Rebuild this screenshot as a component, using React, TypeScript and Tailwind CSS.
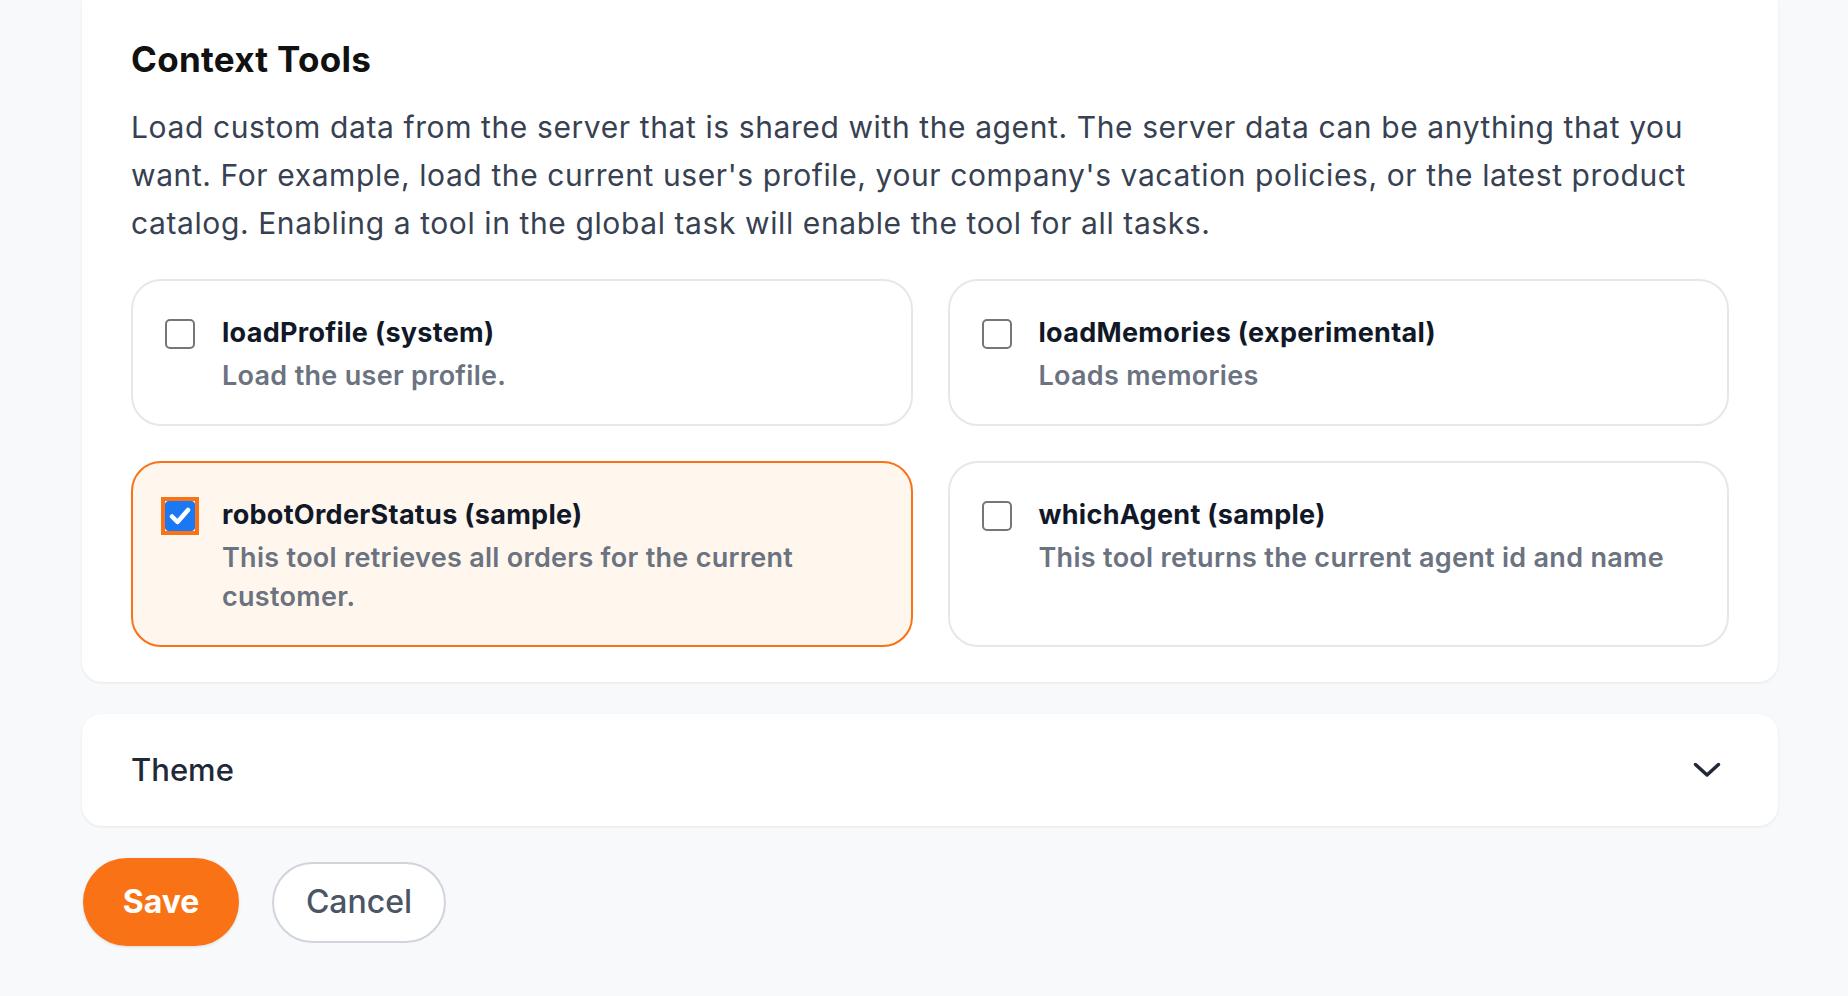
import { useState } from 'react'

const TOOLS = [
  { id: 'loadProfile', label: 'loadProfile (system)', description: 'Load the user profile.' },
  { id: 'loadMemories', label: 'loadMemories (experimental)', description: 'Loads memories' },
  {
    id: 'robotOrderStatus',
    label: 'robotOrderStatus (sample)',
    description: 'This tool retrieves all orders for the current customer.',
  },
  { id: 'whichAgent', label: 'whichAgent (sample)', description: 'This tool returns the current agent id and name' },
]

const INTRO = [
  'Load custom data from the server that is shared with the agent. The server data can be anything that you',
  "want. For example, load the current user's profile, your company's vacation policies, or the latest product",
  'catalog. Enabling a tool in the global task will enable the tool for all tasks.',
]

function Checkbox({ checked }: { checked: boolean }) {
  if (checked) {
    return (
      <div className="w-[30px] h-[30px] shrink-0 mt-[6px] bg-white shadow-[0_0_0_4px_#f97316]">
        <div className="w-full h-full rounded-[4px] bg-[#1a78f5] flex items-center justify-center">
          <svg width="30" height="30" viewBox="0 0 30 30" fill="none">
            <path d="M7 15.5 L12.5 21 L23 9" stroke="white" strokeWidth="4.5" strokeLinecap="round" strokeLinejoin="round" />
          </svg>
        </div>
      </div>
    )
  }
  return <div className="w-[30px] h-[30px] shrink-0 mt-[6px] rounded-[5px] border-2 border-[#767676] bg-white" />
}

export default function App() {
  const [selected, setSelected] = useState<string[]>(['robotOrderStatus'])

  const toggle = (id: string) =>
    setSelected((prev) => (prev.includes(id) ? prev.filter((x) => x !== id) : [...prev, id]))

  return (
    <div
      className="min-h-screen bg-[#f8f9fb] pl-[82px] pr-[70px]"
      style={{ fontFamily: 'Inter, "Noto Sans", sans-serif' }}
    >
      {/* Context tools card */}
      <div className="bg-white rounded-b-[20px] shadow-[0_1px_3px_rgba(0,0,0,0.08)] px-[49px] pt-[39px] pb-[35px]">
        <h2 className="text-[35px] leading-[40px] font-bold text-[#111111] tracking-[0.3px]">Context Tools</h2>
        <p className="mt-[24px] text-[30px] leading-[48px] text-[#374151] tracking-[0.6px]">
          {INTRO.map((line) => (
            <span key={line} className="block whitespace-nowrap">
              {line}
            </span>
          ))}
        </p>

        <div className="mt-[32px] grid grid-cols-2 gap-[35px]">
          {TOOLS.map((tool) => {
            const isChecked = selected.includes(tool.id)
            return (
              <div
                key={tool.id}
                onClick={() => toggle(tool.id)}
                className={`flex items-start gap-[27px] rounded-[30px] border-2 px-[32px] pt-[32px] pb-[29px] cursor-pointer ${
                  isChecked ? 'border-[#f97316] bg-[#fff7ed]' : 'border-[#e5e7eb] bg-white'
                }`}
              >
                <Checkbox checked={isChecked} />
                <div className="min-w-0">
                  <p className="text-[27px] leading-[40px] font-bold text-[#111827] tracking-[0.3px]">{tool.label}</p>
                  <p className="mt-[3px] text-[27px] leading-[39px] font-semibold text-[#6b7280] tracking-[0.3px]">
                    {tool.description}
                  </p>
                </div>
              </div>
            )
          })}
        </div>
      </div>

      {/* Theme accordion */}
      <div className="mt-[32px] h-[112px] bg-white rounded-[20px] shadow-[0_1px_3px_rgba(0,0,0,0.08)] pl-[49px] pr-[57px] flex items-center justify-between">
        <span className="text-[31px] font-medium text-[#1f2937]">Theme</span>
        <svg width="28" height="16" viewBox="0 0 28 16" fill="none">
          <path d="M2.5 2.5 L14 13 L25.5 2.5" stroke="#1f2937" strokeWidth="3.5" strokeLinecap="round" strokeLinejoin="round" />
        </svg>
      </div>

      {/* Actions */}
      <div className="mt-[32px] flex items-center gap-[33px] pl-[1px]">
        <button className="w-[156px] h-[88px] rounded-full bg-[#f97316] text-white text-[32px] font-bold shadow-[0_1px_3px_rgba(0,0,0,0.12)]">
          Save
        </button>
        <button className="w-[174px] h-[81px] rounded-full border-2 border-[#d1d5db] bg-white text-[#4b5563] text-[32px] font-medium">
          Cancel
        </button>
      </div>
    </div>
  )
}
